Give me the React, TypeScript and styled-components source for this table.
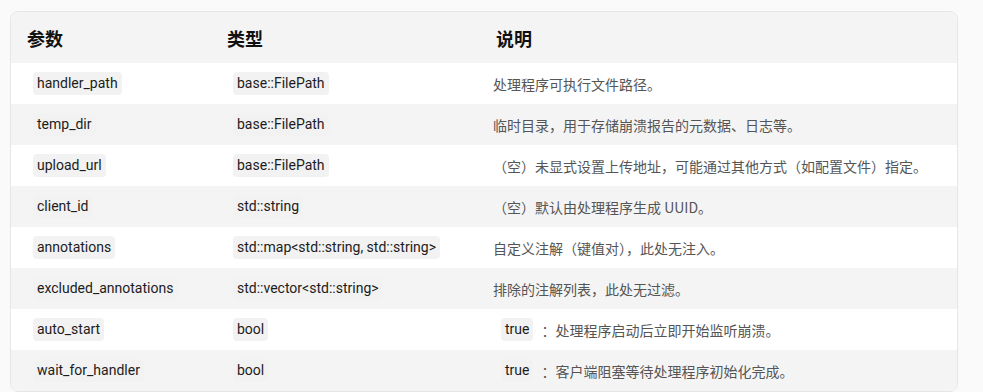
import React from "react";
import styled, { createGlobalStyle } from "styled-components";

const Global = createGlobalStyle`
  html, body { margin: 0; padding: 0; background: #fafafa; }
  body { font-family: Roboto, "Noto Sans CJK SC", sans-serif; }
`;

const Page = styled.div`
  padding: 11px 0 0 10px;
`;

const Card = styled.div`
  width: 946px;
  border: 1px solid #e6e6e6;
  border-radius: 8px;
  overflow: hidden;
  background: #ffffff;
`;

const Row = styled.div<{ $alt?: boolean; $head?: boolean }>`
  display: grid;
  grid-template-columns: 200px 260px 1fr;
  align-items: center;
  height: ${(p) => (p.$head ? 51 : 41)}px;
  background: ${(p) => (p.$alt || p.$head ? "#f4f4f4" : "#ffffff")};
`;

const HeadCell = styled.div<{ $pad: number }>`
  padding-left: ${(p) => p.$pad}px;
  font-family: "Noto Sans CJK SC", sans-serif;
  font-weight: 700;
  font-size: 18px;
  color: #111;
`;

const Cell = styled.div`
  padding-left: 22px;
  font-size: 14px;
  color: #1c1c1c;
  white-space: nowrap;
`;

const Desc = styled.div`
  padding-left: 22px;
  font-family: "Noto Sans CJK SC", sans-serif;
  font-size: 14px;
  color: #555;
  white-space: nowrap;
  display: flex;
  align-items: center;
`;

const Code = styled.span<{ $lead?: boolean }>`
  display: inline-block;
  font-family: Roboto, sans-serif;
  font-size: 14px;
  color: #1c1c1c;
  background: #f2f2f2;
  border-radius: 4px;
  padding: 3px 4px;
  line-height: 17px;
  margin-left: ${(p) => (p.$lead ? 8 : 0)}px;
`;

const Colon = styled.span`
  margin: 0 0 0 8px;
`;

type R = { name: string; type: string; desc: React.ReactNode };

const rows: R[] = [
  { name: "handler_path", type: "base::FilePath", desc: "处理程序可执行文件路径。" },
  { name: "temp_dir", type: "base::FilePath", desc: "临时目录，用于存储崩溃报告的元数据、日志等。" },
  { name: "upload_url", type: "base::FilePath", desc: "（空）未显式设置上传地址，可能通过其他方式（如配置文件）指定。" },
  { name: "client_id", type: "std::string", desc: "（空）默认由处理程序生成 UUID。" },
  { name: "annotations", type: "std::map<std::string, std::string>", desc: "自定义注解（键值对），此处无注入。" },
  { name: "excluded_annotations", type: "std::vector<std::string>", desc: "排除的注解列表，此处无过滤。" },
  {
    name: "auto_start",
    type: "bool",
    desc: (
      <>
        <Code $lead>true</Code>
        <Colon>：</Colon>处理程序启动后立即开始监听崩溃。
      </>
    ),
  },
  {
    name: "wait_for_handler",
    type: "bool",
    desc: (
      <>
        <Code $lead>true</Code>
        <Colon>：</Colon>客户端阻塞等待处理程序初始化完成。
      </>
    ),
  },
];

export default function App() {
  return (
    <>
      <Global />
      <Page>
        <Card>
          <Row $head>
            <HeadCell $pad={16}>参数</HeadCell>
            <HeadCell $pad={16}>类型</HeadCell>
            <HeadCell $pad={25}>说明</HeadCell>
          </Row>
          {rows.map((r, i) => (
            <Row key={r.name} $alt={i % 2 === 1}>
              <Cell>
                <Code>{r.name}</Code>
              </Cell>
              <Cell>
                <Code>{r.type}</Code>
              </Cell>
              <Desc>{r.desc}</Desc>
            </Row>
          ))}
        </Card>
      </Page>
    </>
  );
}
